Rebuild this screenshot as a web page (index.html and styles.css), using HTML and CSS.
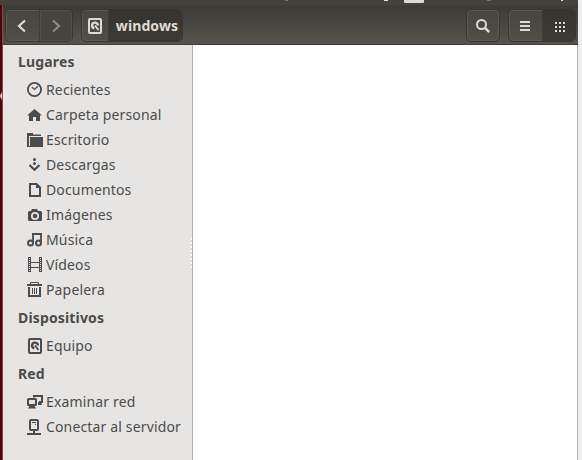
FILE: index.html
```html
<!DOCTYPE html>
<html lang="es">
<head>
<meta charset="utf-8">
<title>windows</title>
<link rel="stylesheet" href="styles.css">
</head>
<body>
<svg class="defs" width="0" height="0">
  <symbol id="disk" viewBox="0 0 16 16">
    <rect x="2" y="1" width="12" height="14" rx="1" fill="none" stroke="currentColor" stroke-width="2"/>
    <path fill="none" stroke="currentColor" stroke-width="2.400" d="M7.300 10.300A2.900 2.900 0 1 1 10.900 7.500"/>
    <path stroke="currentColor" stroke-width="1.800" d="M8 7.500l3.500 4.500"/>
  </symbol>
</svg>
<div class="screen">
  <div class="panel"><i class="mark mark-a"></i><i class="mark mark-b"></i><i class="mark mark-c"></i><i class="mark mark-d"></i><i class="mark mark-e"></i></div>
  <div class="desktop">
    <div class="wallpaper"><i class="pointer"></i></div>
    <div class="window">
      <header class="toolbar">
        <div class="group nav">
          <button class="btn"><svg width="16" height="16"><path class="chev" d="M11 2.500L5 8l6 5.500"/></svg></button>
          <button class="btn dim"><svg width="16" height="16"><path class="chev" d="M5 2.500L11 8l-6 5.500"/></svg></button>
        </div>
        <div class="group path">
          <button class="btn"><svg width="16" height="16"><use href="#disk"/></svg></button>
          <button class="btn on crumb"><span>windows</span></button>
        </div>
        <div class="group search">
          <button class="btn"><svg width="16" height="16"><circle cx="6.500" cy="6.500" r="4.500" fill="none" stroke="currentColor" stroke-width="2"/><path d="M9.800 9.800l4.400 4.200" stroke="currentColor" stroke-width="2.500"/></svg></button>
        </div>
        <div class="group views">
          <button class="btn"><svg width="16" height="16"><path fill="currentColor" d="M3 3h10v2H3zM3 7h10v2H3zM3 11h10v2H3z"/></svg></button>
          <button class="btn on"><svg width="16" height="16"><path fill="currentColor" d="M4 4h2v2H4zM8 4h2v2H8zM12 4h2v2h-2zM4 8h2v2H4zM8 8h2v2H8zM12 8h2v2h-2zM4 12h2v2H4zM8 12h2v2H8zM12 12h2v2h-2z"/></svg></button>
        </div>
      </header>
      <div class="body">
        <nav class="sidebar">
          <h2>Lugares</h2>
          <ul>
            <li><svg width="16" height="16"><circle cx="7.500" cy="7.500" r="6.600" fill="none" stroke="currentColor" stroke-width="1.800"/><path fill="none" stroke="currentColor" stroke-width="1.200" d="M4.800 5l2.700 2.500L11 4"/></svg><span>Recientes</span></li>
            <li><svg width="16" height="16"><path fill="currentColor" d="M7.500 2L.5 8v.5H2V14h4v-4h3v4h4V8.500h1.500V8z"/></svg><span>Carpeta personal</span></li>
            <li><svg width="16" height="16"><path fill="currentColor" d="M0 1h6v1.500h8V4H2v10L0 15z"/><path fill="currentColor" d="M3 5h13v10H0v-1h3z"/></svg><span>Escritorio</span></li>
            <li><svg width="16" height="16"><circle cx="7.500" cy="2.500" r="1.500" fill="currentColor"/><circle cx="7.500" cy="6.500" r="1.500" fill="currentColor"/><path fill="none" stroke="currentColor" stroke-width="2.200" d="M2.500 8l5 4.700 5-4.700"/></svg><span>Descargas</span></li>
            <li><svg width="16" height="16"><path fill="none" stroke="currentColor" stroke-width="2" d="M3 2h6.500L13 5.500V14H3z"/><path fill="currentColor" d="M9 2h1l3 3v1H9z"/></svg><span>Documentos</span></li>
            <li><svg width="16" height="16"><path fill="currentColor" fill-rule="evenodd" d="M5 2h5l1 2h2.500q1.500 0 1.500 1.500v7q0 1.500-1.500 1.500h-11Q1 14 1 12.500v-7Q1 4 2.500 4H4zM8 5a4 4 0 1 0 0 8 4 4 0 0 0 0-8z"/><circle cx="8" cy="9" r="2.300" fill="currentColor"/></svg><span>Imágenes</span></li>
            <li><svg width="16" height="16"><path fill="none" stroke="currentColor" stroke-width="1.800" d="M6 11.500V2h8v9.500"/><path fill="currentColor" d="M5 1h10v2H5z"/><circle cx="3.500" cy="11" r="2.500" fill="none" stroke="currentColor" stroke-width="2"/><circle cx="11.500" cy="11" r="2.500" fill="none" stroke="currentColor" stroke-width="2"/></svg><span>Música</span></li>
            <li><svg width="16" height="16"><path fill="none" stroke="currentColor" d="M1.500 0v15M3.500 0v15M12.500 0v15M14.500 0v15"/><path stroke="currentColor" stroke-width="2" stroke-dasharray="1 1" d="M2.500 0v16M13.500 0v16"/><path stroke="currentColor" d="M4 5.500h8M4 10.500h8"/></svg><span>Vídeos</span></li>
            <li><svg width="16" height="16"><path fill="none" stroke="currentColor" d="M3.500 2V.5h8V2"/><path stroke="currentColor" stroke-width="2" d="M0 3h15"/><path fill="none" stroke="currentColor" stroke-width="2" d="M2 5v9h11V5"/><path stroke="currentColor" d="M5.500 6v6M7.500 6v6M9.500 6v6"/></svg><span>Papelera</span></li>
          </ul>
          <h2>Dispositivos</h2>
          <ul>
            <li><svg width="16" height="16"><use href="#disk"/></svg><span>Equipo</span></li>
          </ul>
          <h2>Red</h2>
          <ul>
            <li><svg width="16" height="16"><path fill="none" stroke="currentColor" stroke-width="2" d="M7 3.500V2h8v6h-3"/><path fill="currentColor" d="M11 8h3l1 3h-4z"/><rect x="1" y="5" width="8" height="6" rx=".5" fill="none" stroke="currentColor" stroke-width="2"/><path fill="currentColor" d="M3 11h4l2 3.500H1z"/></svg><span>Examinar red</span></li>
            <li><svg width="16" height="16"><rect x="3" y="1" width="8" height="10" rx="1" fill="none" stroke="currentColor" stroke-width="2"/><path fill="currentColor" d="M5 3h4v1H5zM8 5h1v1H8zM6 12h2v2h6v2H0v-2h6z"/></svg><span>Conectar al servidor</span></li>
          </ul>
          <i class="grip"></i>
        </nav>
        <main class="files"></main>
      </div>
    </div>
  </div>
</div>
</body>
</html>
```
FILE: styles.css
```css
* { box-sizing: border-box; }
body {
  margin: 0;
  height: 460px;
  overflow: hidden;
  background: #eeeeee;
  font-family: "Noto Sans", sans-serif;
  font-size: 14px;
  letter-spacing: 0.15px;
  color: #4c4c4c;
}
.defs { position: absolute; }
.screen { width: 578px; height: 460px; display: flex; flex-direction: column; }
.panel { position: relative; height: 5px; background: #43423c; }
.mark { position: absolute; top: 0; background: #dfdbd2; }
.mark-a { left: 404px; width: 20px; height: 3px; border-radius: 0 0 1px 1px; }
.mark-b { left: 384px; width: 4px; height: 1px; }
.mark-c { left: 285px; width: 3px; height: 1px; background: #77756e; }
.mark-d { left: 487px; width: 4px; height: 1px; background: #77756e; }
.mark-e { left: 561px; width: 2px; height: 1px; }
.desktop { flex: 1; display: flex; min-height: 0; }
.wallpaper { position: relative; width: 3px; background: #430a12; border-right: 1px solid #8c443f; }
.pointer {
  position: absolute;
  left: 0;
  top: 87px;
  border: solid transparent;
  border-width: 4px 2px 4px 0;
  border-right-color: #e6e5e3;
}
.window { flex: 1; display: flex; flex-direction: column; }
.toolbar {
  height: 40px;
  display: flex;
  align-items: flex-start;
  padding: 3px 2px 0 2px;
  background: linear-gradient(#3c3b37, #56534b);
  border-top: 1px solid #403f3a;
  border-bottom: 1px solid #403e38;
}
.group {
  display: flex;
  height: 33px;
  border: 1px solid #36352f;
  border-radius: 5px;
  background: linear-gradient(#46453f, #504e47);
  box-shadow: inset 0 0 0 1px #5b5951;
  overflow: hidden;
}
.nav { width: 68px; }
.path { width: 102px; margin-left: 8px; }
.search { width: 34px; margin-left: auto; }
.views { width: 68px; margin-left: 8px; }
.btn {
  flex: 1;
  display: flex;
  align-items: center;
  justify-content: center;
  margin: 0;
  padding: 0;
  border: 0;
  background: none;
  color: #dfdbd2;
}
.btn + .btn { border-left: 1px solid #3d3c37; }
.path .btn:first-child { flex: 0 0 26px; }
.chev { fill: none; stroke: currentColor; stroke-width: 2.2; }
.dim { color: #8d8a82; background: #46443e; box-shadow: inset 0 0 0 1px #504e47; }
.on { background: linear-gradient(#35342f, #3c3a35); }
.crumb { font: bold 14px "Noto Sans", sans-serif; letter-spacing: 0.1px; padding-left: 3px; }
.body { flex: 1; display: flex; min-height: 0; }
.sidebar {
  position: relative;
  width: 190px;
  padding-top: 1px;
  background: #e6e5e3;
  border-right: 1px solid #b5b2ae;
}
.sidebar h2 {
  height: 31px;
  margin: 0;
  padding-left: 15px;
  font-size: 14px;
  line-height: 31px;
}
.sidebar ul { margin: 0; padding: 0; list-style: none; }
.sidebar li {
  display: flex;
  align-items: center;
  gap: 3px;
  height: 25px;
  padding-left: 24px;
  white-space: nowrap;
}
.grip {
  position: absolute;
  right: 0;
  top: 193px;
  width: 1px;
  height: 32px;
  background: repeating-linear-gradient(#fff 0 2px, #d5d3d0 2px 4px);
}
.files { flex: 1; background: #fff; border-right: 1px solid #b5b5b5; }
```
